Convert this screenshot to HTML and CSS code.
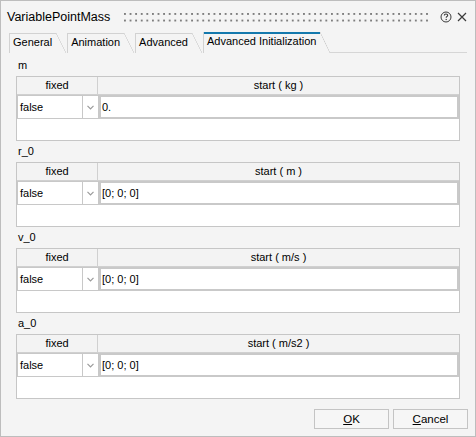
FILE: index.html
```html
<!DOCTYPE html>
<html>
<head>
<meta charset="utf-8">
<title>VariablePointMass</title>
<link rel="stylesheet" href="styles.css">
</head>
<body>
<div class="window">
  <div class="titlebar">
    <span class="title">VariablePointMass</span>
    <span class="grip"></span>
    <svg class="help" width="12" height="12" viewBox="0 0 12 12">
      <circle cx="6" cy="6" r="5" fill="none" stroke="#3a3a3a" stroke-width="1"/>
      <path d="M4.3 4.6 C4.3 3.5 5 3 6 3 C7 3 7.7 3.6 7.7 4.4 C7.7 5.4 6.2 5.5 6.2 6.8" fill="none" stroke="#3a3a3a" stroke-width="1.1"/>
      <rect x="5.6" y="7.9" width="1.2" height="1.2" fill="#3a3a3a"/>
    </svg>
    <svg class="close" width="10" height="10" viewBox="0 0 10 10">
      <path d="M1 1 L9 9 M9 1 L1 9" stroke="#3a3a3a" stroke-width="1.2"/>
    </svg>
  </div>

  <div class="tabs">
    <div class="tab">General</div>
    <div class="tab">Animation</div>
    <div class="tab">Advanced</div>
    <div class="tab active">Advanced Initialization</div>
    <div class="tabline"></div>
  </div>

  <div class="page">
    <section class="param">
      <div class="label">m</div>
      <div class="tbl">
        <div class="thead"><div class="th fixed">fixed</div><div class="th">start ( kg )</div></div>
        <div class="trow">
          <div class="sel">false</div>
          <div class="arrow"><svg width="7" height="5" viewBox="0 0 7 5"><path d="M0.5 0.8 L3.5 3.8 L6.5 0.8" fill="none" stroke="#9a9a9a" stroke-width="1.2"/></svg></div>
          <div class="div"></div>
          <div class="val">0.</div>
        </div>
        <div class="tempty"></div>
      </div>
    </section>

    <section class="param">
      <div class="label">r_0</div>
      <div class="tbl">
        <div class="thead"><div class="th fixed">fixed</div><div class="th">start ( m )</div></div>
        <div class="trow">
          <div class="sel">false</div>
          <div class="arrow"><svg width="7" height="5" viewBox="0 0 7 5"><path d="M0.5 0.8 L3.5 3.8 L6.5 0.8" fill="none" stroke="#9a9a9a" stroke-width="1.2"/></svg></div>
          <div class="div"></div>
          <div class="val">[0; 0; 0]</div>
        </div>
        <div class="tempty"></div>
      </div>
    </section>

    <section class="param">
      <div class="label">v_0</div>
      <div class="tbl">
        <div class="thead"><div class="th fixed">fixed</div><div class="th">start ( m/s )</div></div>
        <div class="trow">
          <div class="sel">false</div>
          <div class="arrow"><svg width="7" height="5" viewBox="0 0 7 5"><path d="M0.5 0.8 L3.5 3.8 L6.5 0.8" fill="none" stroke="#9a9a9a" stroke-width="1.2"/></svg></div>
          <div class="div"></div>
          <div class="val">[0; 0; 0]</div>
        </div>
        <div class="tempty"></div>
      </div>
    </section>

    <section class="param">
      <div class="label">a_0</div>
      <div class="tbl">
        <div class="thead"><div class="th fixed">fixed</div><div class="th">start ( m/s2 )</div></div>
        <div class="trow">
          <div class="sel">false</div>
          <div class="arrow"><svg width="7" height="5" viewBox="0 0 7 5"><path d="M0.5 0.8 L3.5 3.8 L6.5 0.8" fill="none" stroke="#9a9a9a" stroke-width="1.2"/></svg></div>
          <div class="div"></div>
          <div class="val">[0; 0; 0]</div>
        </div>
        <div class="tempty"></div>
      </div>
    </section>
  </div>

  <div class="footer">
    <button class="btn"><u>O</u>K</button>
    <button class="btn"><u>C</u>ancel</button>
  </div>
</div>
</body>
</html>
```

FILE: styles.css
```css
html, body {
  margin: 0;
  padding: 0;
  background: #f4f4f4;
}

body {
  font-family: "Liberation Sans", Arial, sans-serif;
  font-size: 11px;
  color: #000;
}

.window {
  width: 476px;
  height: 437px;
  box-sizing: border-box;
  border: 1px solid #bdbdbd;
  background: #f4f4f4;
  display: flex;
  flex-direction: column;
}

/* title bar with drag grip */
.titlebar {
  height: 30px;
  display: flex;
  align-items: center;
  padding: 0 8px 0 6px;
  box-sizing: border-box;
}

.title {
  font-size: 12.5px;
  padding-top: 2px;
}

.grip {
  flex: 1;
  height: 11px;
  margin: 2px 10px 0 14px;
  background-image: radial-gradient(circle at 1px 1px, #7e7e7e 1px, transparent 1.4px);
  background-size: 5.6px 6.6px;
  background-position: 0 1px;
}

.help {
  margin-top: 1px;
  margin-right: 5px;
}

.close {
  margin-top: 1px;
}

/* tab strip */
.tabs {
  height: 22px;
  display: flex;
  align-items: flex-end;
  padding-left: 8px;
}

.tab {
  position: relative;
  height: 20px;
  line-height: 19px;
  padding: 0 14px 0 3px;
  border-left: 1px solid #d2d2d2;
  margin-right: 1px;
  font-size: 11px;
}

.tab::before {
  content: "";
  position: absolute;
  left: 0;
  right: 10px;
  top: 0;
  border-top: 1px solid #d2d2d2;
}

.tab::after {
  content: "";
  position: absolute;
  right: 0;
  top: 0;
  width: 10px;
  height: 100%;
  background: linear-gradient(to top right, transparent calc(50% - 0.6px), #cdcdcd 50%, transparent calc(50% + 0.6px));
}

.tab.active {
  height: 21px;
  margin-right: 0;
  line-height: 19px;
}

.tab.active::before {
  border-top: 2px solid #1479ad;
}

.tabline {
  flex: 1;
  margin-right: 8px;
  border-bottom: 1px solid #d6d6d6;
}

/* parameter tables */
.page {
  padding: 2px 15px 0 15px;
}

.label {
  height: 21px;
  line-height: 21px;
  padding-left: 2px;
}

.tbl {
  width: 444px;
  box-sizing: border-box;
  border: 1px solid #c6c6c6;
  background: #fff;
}

.thead {
  display: grid;
  grid-template-columns: 81px 1fr;
  height: 18px;
  box-sizing: border-box;
  border-bottom: 1px solid #d0d0d0;
  background: #f3f3f3;
}

.th {
  text-align: center;
  line-height: 17px;
}

.th.fixed {
  border-right: 1px solid #d0d0d0;
}

.trow {
  display: grid;
  grid-template-columns: 66px 15px 1px 360px;
  height: 24px;
}

.sel {
  border: 1px solid #c8c8c8;
  padding-left: 2px;
  line-height: 22px;
}

.arrow {
  border-top: 1px solid #c8c8c8;
  border-bottom: 1px solid #c8c8c8;
  display: flex;
  align-items: center;
  justify-content: center;
}

.div {
  background: #c8c8c8;
}

.val {
  border: 2px solid #c9c9c9;
  padding-left: 1px;
  line-height: 20px;
}

.tempty {
  height: 21px;
}

/* dialog buttons */
.footer {
  display: flex;
  justify-content: flex-end;
  gap: 4px;
  padding: 10px 7px 0 0;
}

.btn {
  width: 75px;
  height: 20px;
  box-sizing: border-box;
  border: 1px solid #c4c4c4;
  background: #f6f6f6;
  font-family: "Liberation Sans", Arial, sans-serif;
  font-size: 11.5px;
  color: #000;
  padding: 0;
}
```
